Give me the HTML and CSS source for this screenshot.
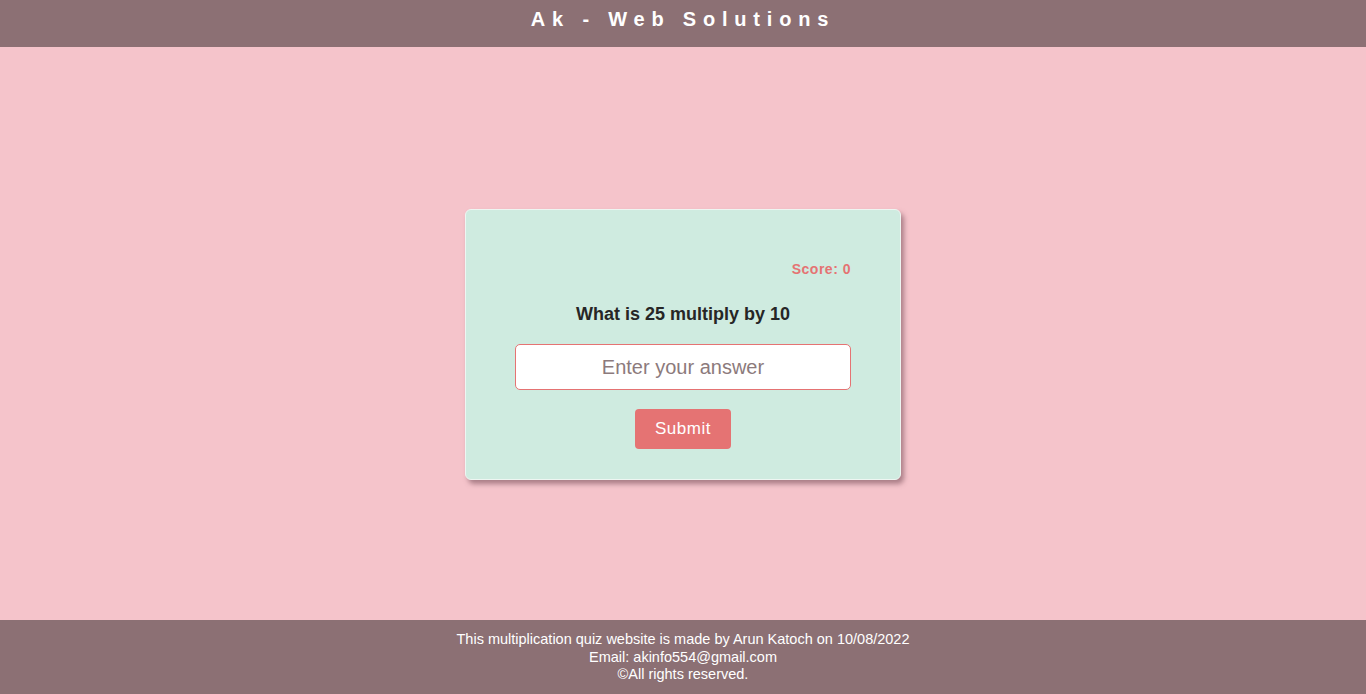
FILE: index.html
```html
<!DOCTYPE html>
<html lang="en">
<head>
<meta charset="utf-8">
<title>Multiplication Quiz</title>
<link rel="stylesheet" href="styles.css">
</head>
<body>
<header class="topbar"><h1 class="brand">Ak - Web Solutions</h1></header>
<main class="main">
  <form class="card" onsubmit="return false">
    <p class="score">Score: 0</p>
    <h2 class="question">What is 25 multiply by 10</h2>
    <input class="answer" type="text" placeholder="Enter your answer">
    <button class="submit" type="submit">Submit</button>
  </form>
</main>
<footer class="footer">
  <p>This multiplication quiz website is made by Arun Katoch on 10/08/2022</p>
  <p>Email: akinfo554@gmail.com</p>
  <p>&copy;All rights reserved.</p>
</footer>
</body>
</html>
```
FILE: styles.css
```css
* { box-sizing: border-box; }
html, body { margin: 0; padding: 0; }
body {
  font-family: "Liberation Sans", Arial, sans-serif;
  background: #f5c4cb;
  min-height: 100vh;
  display: flex;
  flex-direction: column;
}
.topbar {
  height: 47px;
  background: #8c7074;
  display: flex;
  align-items: center;
  justify-content: center;
}
.brand {
  margin: 0;
  color: #fff;
  font-size: 20px;
  font-weight: bold;
  letter-spacing: 6.8px;
  padding-bottom: 8px;
}
.main {
  flex: 1;
  display: flex;
  justify-content: center;
  align-items: flex-start;
  padding-top: 162px;
}
.card {
  width: 436px;
  height: 271px;
  background: #cfebe0;
  border: 1px solid #eef6f2;
  border-radius: 6px;
  box-shadow: 3px 4px 5px rgba(110, 70, 80, 0.55);
  display: flex;
  flex-direction: column;
  align-items: center;
  padding: 51px 49px 0;
}
.score {
  align-self: flex-end;
  margin: 0;
  color: #e57373;
  font-size: 14px;
  font-weight: bold;
  letter-spacing: 0.5px;
}
.question {
  margin: 27px 0 0;
  font-size: 18px;
  font-weight: bold;
  color: #262626;
}
.answer {
  margin-top: 19px;
  width: 336px;
  height: 46px;
  border: 1px solid #e57373;
  border-radius: 5px;
  background: #fff;
  text-align: center;
  font-family: "Liberation Sans", Arial, sans-serif;
  font-size: 20px;
  color: #333;
  outline: none;
}
.answer::placeholder { color: #8c7a7c; }
.submit {
  margin-top: 19px;
  width: 96px;
  height: 40px;
  border: none;
  border-radius: 4px;
  background: #e57373;
  color: #fff;
  font-family: "Liberation Sans", Arial, sans-serif;
  font-size: 17px;
  letter-spacing: 0.5px;
}
.footer {
  height: 74px;
  background: #8c7074;
  color: #fff;
  text-align: center;
  font-size: 14.5px;
  line-height: 17.5px;
  padding-top: 11px;
}
.footer p { margin: 0; }
```
